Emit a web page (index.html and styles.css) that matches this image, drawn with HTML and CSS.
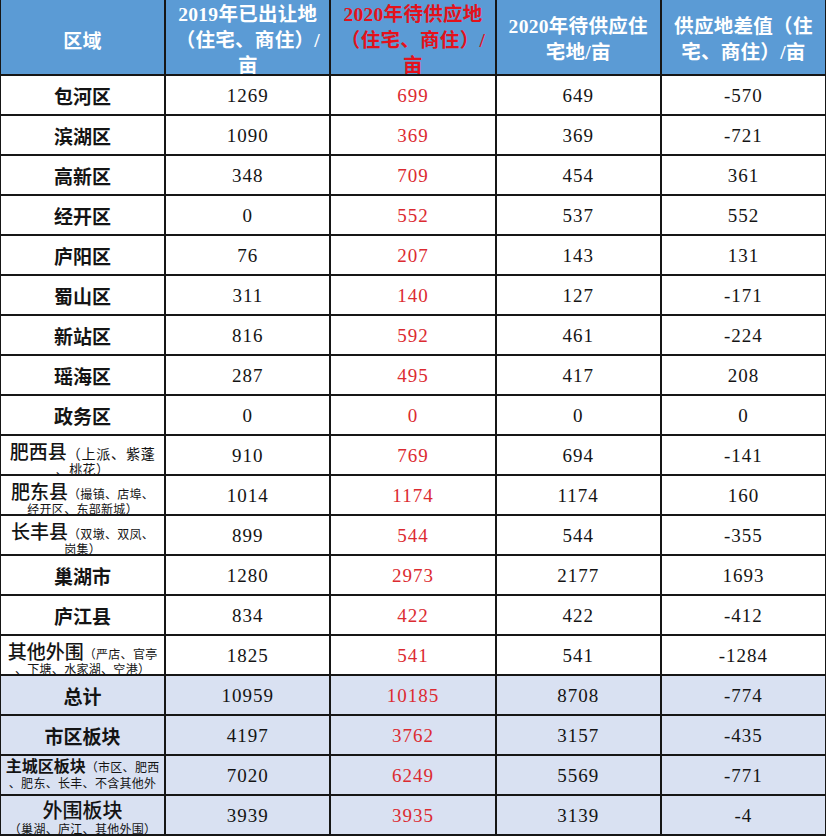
FILE: index.html
```html
<!DOCTYPE html>
<html lang="zh-CN">
<head>
<meta charset="utf-8">
<title>供应地统计</title>
<link rel="stylesheet" href="styles.css">
</head>
<body>
<div class="sheet">
  <div class="hd hd-one">区域</div>
  <div class="hd hd-three">2019年已出让地<br>（住宅、商住）/<br>亩</div>
  <div class="hd hd-three red">2020年待供应地<br>（住宅、商住）/<br>亩</div>
  <div class="hd hd-two">2020年待供应住<br>宅地/亩</div>
  <div class="hd hd-two">供应地差值（住<br>宅、商住）/亩</div>

  <div class="c name">包河区</div><div class="c num">1269</div><div class="c num r">699</div><div class="c num">649</div><div class="c num">-570</div>
  <div class="c name">滨湖区</div><div class="c num">1090</div><div class="c num r">369</div><div class="c num">369</div><div class="c num">-721</div>
  <div class="c name">高新区</div><div class="c num">348</div><div class="c num r">709</div><div class="c num">454</div><div class="c num">361</div>
  <div class="c name">经开区</div><div class="c num">0</div><div class="c num r">552</div><div class="c num">537</div><div class="c num">552</div>
  <div class="c name">庐阳区</div><div class="c num">76</div><div class="c num r">207</div><div class="c num">143</div><div class="c num">131</div>
  <div class="c name">蜀山区</div><div class="c num">311</div><div class="c num r">140</div><div class="c num">127</div><div class="c num">-171</div>
  <div class="c name">新站区</div><div class="c num">816</div><div class="c num r">592</div><div class="c num">461</div><div class="c num">-224</div>
  <div class="c name">瑶海区</div><div class="c num">287</div><div class="c num r">495</div><div class="c num">417</div><div class="c num">208</div>
  <div class="c name">政务区</div><div class="c num">0</div><div class="c num r">0</div><div class="c num">0</div><div class="c num">0</div>

  <div class="c multi"><div class="l1"><span class="big">肥西县</span><span class="sm sm14">（上派、紫蓬</span></div><div class="l2 sm14">、桃花）</div></div>
  <div class="c num">910</div><div class="c num r">769</div><div class="c num">694</div><div class="c num">-141</div>

  <div class="c multi"><div class="l1"><span class="big">肥东县</span><span class="sm">（撮镇、店埠、</span></div><div class="l2">经开区、东部新城）</div></div>
  <div class="c num">1014</div><div class="c num r">1174</div><div class="c num">1174</div><div class="c num">160</div>

  <div class="c multi"><div class="l1"><span class="big">长丰县</span><span class="sm">（双墩、双凤、</span></div><div class="l2">岗集）</div></div>
  <div class="c num">899</div><div class="c num r">544</div><div class="c num">544</div><div class="c num">-355</div>

  <div class="c name">巢湖市</div><div class="c num">1280</div><div class="c num r">2973</div><div class="c num">2177</div><div class="c num">1693</div>
  <div class="c name">庐江县</div><div class="c num">834</div><div class="c num r">422</div><div class="c num">422</div><div class="c num">-412</div>

  <div class="c multi"><div class="l1"><span class="big">其他外围</span><span class="sm">（严店、官亭</span></div><div class="l2">、下塘、水家湖、空港）</div></div>
  <div class="c num">1825</div><div class="c num r">541</div><div class="c num">541</div><div class="c num">-1284</div>

  <div class="c t name">总计</div><div class="c t num">10959</div><div class="c t num r">10185</div><div class="c t num">8708</div><div class="c t num">-774</div>
  <div class="c t name">市区板块</div><div class="c t num">4197</div><div class="c t num r">3762</div><div class="c t num">3157</div><div class="c t num">-435</div>

  <div class="c t multi tight"><div class="l1"><span class="big bold16">主城区板块</span><span class="sm">（市区、肥西</span></div><div class="l2 sm13">、肥东、长丰、不含其他外</div><div class="l2 sm13">围）</div></div>
  <div class="c t num">7020</div><div class="c t num r">6249</div><div class="c t num">5569</div><div class="c t num">-771</div>

  <div class="c t multi outer"><div class="l1"><span class="big">外围板块</span></div><div class="l2">（巢湖、庐江、其他外围）</div></div>
  <div class="c t num">3939</div><div class="c t num r">3935</div><div class="c t num">3139</div><div class="c t num">-4</div>
</div>
</body>
</html>
```

FILE: styles.css
```css
html, body {
  margin: 0;
  padding: 0;
  background: #ffffff;
}

.sheet {
  width: 826px;
  box-sizing: border-box;
  display: grid;
  grid-template-columns: repeat(5, 1fr);
  grid-template-rows: 74px repeat(19, 38px);
  gap: 2px;
  padding: 0 1px 2px 1px;
  background: #161616;
}

.hd {
  background: #5b9bd5;
  color: #ffffff;
  font-family: "Liberation Serif", "Noto Sans CJK SC", serif;
  font-weight: 700;
  font-size: 19.5px;
  letter-spacing: 0.3px;
  text-align: center;
  white-space: nowrap;
  overflow: hidden;
  line-height: 25.5px;
}

.hd-three { padding-top: 2px; }
.hd-two { padding-top: 14px; }
.hd-one {
  padding-top: 27px;
  line-height: 26px;
  font-family: "Noto Sans CJK SC", sans-serif;
  font-size: 19px;
}
.hd.red { color: #e3121c; }

.c {
  background: #ffffff;
  overflow: hidden;
  white-space: nowrap;
  text-align: center;
  color: #141414;
}

.c.t { background: #d9e1f2; }

.name {
  display: flex;
  align-items: center;
  justify-content: center;
  font-family: "Noto Sans CJK SC", sans-serif;
  font-weight: 700;
  font-size: 19px;
}

.num {
  display: flex;
  align-items: center;
  justify-content: center;
  padding-top: 2px;
  box-sizing: border-box;
  font-family: "Liberation Serif", serif;
  font-size: 19px;
  letter-spacing: 1px;
}

.num.r { color: #dc2b31; }

.multi {
  font-family: "Noto Sans CJK SC", sans-serif;
  padding-top: 5px;
  box-sizing: border-box;
}

.multi .l1 {
  line-height: 20px;
  height: 20px;
}

.multi .l2 {
  line-height: 16px;
  font-size: 12px;
  letter-spacing: 0.3px;
}

.big {
  font-size: 19px;
  font-weight: 500;
}

.sm {
  font-size: 12px;
  letter-spacing: 0.3px;
}

.sm14 {
  font-size: 14px;
  letter-spacing: 0.8px;
}

.multi .l2.sm14 { font-size: 13px; letter-spacing: 0.4px; }

.tight { padding-top: 0; }
.tight .l1 { line-height: 18px; height: 18px; }
.tight .l2 { line-height: 17px; }
.bold16 { font-size: 16px; font-weight: 700; }
.sm13 { font-size: 13px; letter-spacing: 0; }

.outer { padding-top: 4px; }
.outer .big { font-size: 20px; font-weight: 500; }
.outer .l2 { line-height: 18px; }
```
